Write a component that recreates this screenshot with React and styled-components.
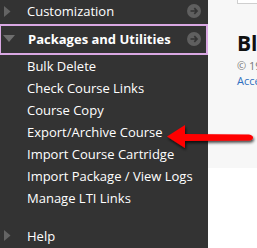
import React from 'react';
import styled, { createGlobalStyle } from 'styled-components';

const GlobalStyle = createGlobalStyle`
  html, body {
    margin: 0;
    padding: 0;
    background: #fff;
    font-family: 'Open Sans', 'Liberation Sans', sans-serif;
  }
`;

const tools = [
  'Bulk Delete',
  'Check Course Links',
  'Course Copy',
  'Export/Archive Course',
  'Import Course Cartridge',
  'Import Package / View Logs',
  'Manage LTI Links',
];

const Caret = ({ open }) =>
  open ? (
    <svg width="12" height="8" viewBox="0 0 12 8">
      <polygon points="0,0 12,0 6,7" fill="#6e6e6e" />
    </svg>
  ) : (
    <svg width="7" height="11" viewBox="0 0 7 11">
      <polygon points="0,0 6.5,5.5 0,11" fill="#646464" />
    </svg>
  );

const GoIcon = () => (
  <svg width="14" height="14" viewBox="0 0 14 14">
    <circle cx="7" cy="7" r="7" fill="#5f5f5f" />
    <path d="M3.5 7h6.5M7.3 4.2 10 7l-2.7 2.8" stroke="#333" strokeWidth="1.7" fill="none" />
  </svg>
);

const Section = ({ label, open, active, go }) => (
  <Header $active={active} $open={open}>
    <CaretSlot>
      <Caret open={open} />
    </CaretSlot>
    <HeaderLabel $bold={open}>{label}</HeaderLabel>
    {go && <GoIcon />}
  </Header>
);

const RedArrow = () => (
  <ArrowLayer width="92" height="34" viewBox="0 0 92 34">
    <defs>
      <filter id="sh" x="-20%" y="-40%" width="140%" height="200%">
        <feDropShadow dx="1" dy="2" stdDeviation="1.4" floodColor="#000" floodOpacity="0.75" />
      </filter>
    </defs>
    <g filter="url(#sh)">
      <path d="M20 14 L84 14.5 Q88 15.5 88 17.5 Q88 20 84 20.5 L20 21 Z" fill="#f00" />
      <path d="M2 16.5 L20 5 L20 28 Z" fill="#f00" />
    </g>
  </ArrowLayer>
);

export default function App() {
  return (
    <>
      <GlobalStyle />
      <Page>
        <Sidebar>
          <Section label="Customization" go />
          <Section label="Packages and Utilities" open active go />
          <ToolList>
            {tools.map((t) => (
              <ToolItem key={t}>{t}</ToolItem>
            ))}
          </ToolList>
          <Spacer />
          <Section label="Help" />
        </Sidebar>
        <Content>
          <Banner>
            <TopBox />
            <Title>Bl</Title>
            <Copy>© 19</Copy>
            <Access>Acce</Access>
          </Banner>
        </Content>
        <RedArrow />
      </Page>
    </>
  );
}

const Page = styled.div`
  position: relative;
  display: flex;
  width: 257px;
  height: 248px;
  overflow: hidden;
`;

const Sidebar = styled.nav`
  width: 208px;
  flex-shrink: 0;
  background: #333333;
  display: flex;
  flex-direction: column;
`;

const Header = styled.div`
  display: flex;
  align-items: center;
  box-sizing: border-box;
  height: ${(p) => (p.$open ? '33px' : '26px')};
  margin-top: ${(p) => (p.$open ? '0' : '-1px')};
  padding-right: 5px;
  border: 2px solid ${(p) => (p.$active ? '#d9a8e3' : 'transparent')};
  border-left-width: ${(p) => (p.$active ? '1px' : '0')};
  color: #fff;
  font-size: 13px;
`;

const CaretSlot = styled.span`
  width: 27px;
  display: flex;
  justify-content: center;
  margin-left: -6px;
`;

const HeaderLabel = styled.span`
  flex: 1;
  margin-left: 6px;
  font-weight: ${(p) => (p.$bold ? 700 : 400)};
  white-space: nowrap;
`;

const ToolList = styled.ul`
  list-style: none;
  margin: 0;
  padding: 0 0 0 27px;
`;

const ToolItem = styled.li`
  height: 22px;
  line-height: 22px;
  color: #fff;
  font-size: 13px;
  white-space: nowrap;
`;

const Spacer = styled.div`
  height: 16px;
`;

const Content = styled.main`
  flex: 1;
  display: flex;
  flex-direction: column;
  background: #fff;
`;

const Banner = styled.div`
  height: 168px;
  background: #f7f7f7;
  padding-left: 29px;
  box-sizing: border-box;
  display: flex;
  flex-direction: column;
`;

const TopBox = styled.div`
  height: 3px;
  border: 1px solid #cfcfcf;
  border-top: none;
  border-right: none;
  background: #fff;
`;

const Title = styled.h1`
  margin: 26px 0 0;
  font-size: 21px;
  line-height: 26px;
  font-weight: 700;
  color: #111;
  white-space: nowrap;
`;

const Copy = styled.div`
  margin-top: 2px;
  font-size: 11px;
  line-height: 15px;
  color: #777;
  white-space: nowrap;
`;

const Access = styled.div`
  margin-top: 0;
  font-size: 11px;
  line-height: 15px;
  color: #2f6fbf;
  white-space: nowrap;
`;

const ArrowLayer = styled.svg`
  position: absolute;
  left: 165px;
  top: 120px;
`;
